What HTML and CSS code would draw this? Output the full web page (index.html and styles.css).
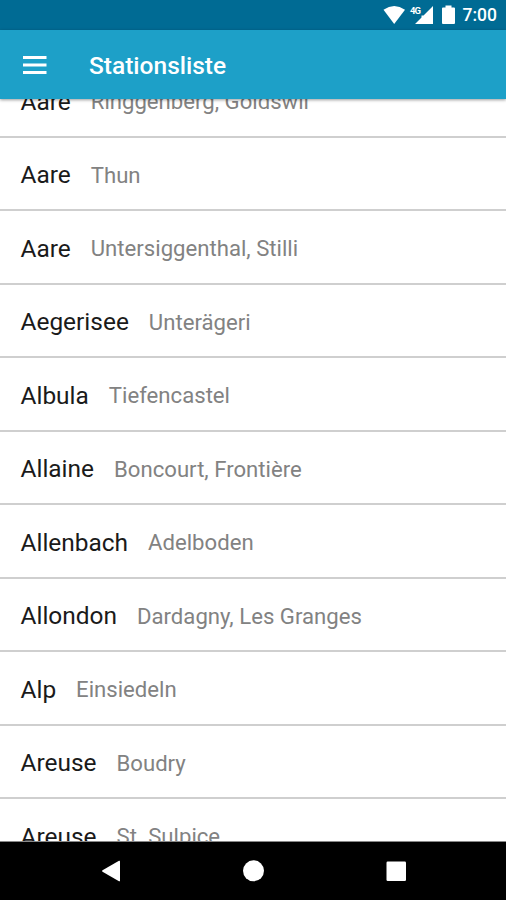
FILE: index.html
```html
<!DOCTYPE html>
<html lang="de">
<head>
<meta charset="utf-8">
<title>Stationsliste</title>
<link rel="stylesheet" href="styles.css">
</head>
<body>
<div class="status">
<svg class="status-icons" width="80" height="30" viewBox="0 0 80 30" fill="#fff">
<path d="M3.500 9.700Q14.200 2.500 25 9.700L14.200 24Z"/>
<path d="M53 6V24H35L41.500 17.500V15.500H43.500Z"/>
<path d="M62 8.500Q62 7.500 63 7.500H65.500V5.500H71.500V7.500H74Q75 7.500 75 8.500V23Q75 24 74 24H63Q62 24 62 23Z"/>
<text class="net" x="30" y="14">4G</text>
</svg>
<span class="time">7:00</span>
</div>
<header class="bar">
<svg class="menu" width="24" height="18" viewBox="0 0 24 18" fill="#fff"><path d="M0 0h23.500v3H0zM0 7.500h23.500v3H0zM0 15h23.500v3H0z"/></svg>
<h1 class="title">Stationsliste</h1>
</header>
<main class="list">
<div class="row"><span class="name">Aare</span><span class="place">Ringgenberg, Goldswil</span></div>
<div class="row"><span class="name">Aare</span><span class="place">Thun</span></div>
<div class="row"><span class="name">Aare</span><span class="place">Untersiggenthal, Stilli</span></div>
<div class="row"><span class="name">Aegerisee</span><span class="place">Unterägeri</span></div>
<div class="row"><span class="name">Albula</span><span class="place">Tiefencastel</span></div>
<div class="row"><span class="name">Allaine</span><span class="place">Boncourt, Frontière</span></div>
<div class="row"><span class="name">Allenbach</span><span class="place">Adelboden</span></div>
<div class="row"><span class="name">Allondon</span><span class="place">Dardagny, Les Granges</span></div>
<div class="row"><span class="name">Alp</span><span class="place">Einsiedeln</span></div>
<div class="row"><span class="name">Areuse</span><span class="place">Boudry</span></div>
<div class="row"><span class="name">Areuse</span><span class="place">St. Sulpice</span></div>
</main>
<nav class="nav">
<svg width="506" height="58" viewBox="0 0 506 58" fill="#fff"><path d="M102.500 28.200L119 18.800Q120 18.300 120 19.300V38.700Q120 39.700 119 39.200L102.500 29.800Q101.500 29 102.500 28.200Z"/><circle cx="253.500" cy="28.800" r="10.500"/><rect x="386.500" y="19.500" width="19.500" height="19.500" rx="1.200"/></svg>
</nav>
</body>
</html>
```
FILE: styles.css
```css
body { margin: 0; width: 506px; height: 900px; overflow: hidden; display: flex; flex-direction: column; background: #fff; font-family: Roboto, sans-serif; }
.status { flex: none; height: 30px; background: #006b94; display: flex; align-items: center; justify-content: flex-end; padding-right: 9px; color: #fff; }
.status-icons { margin-right: 3px; flex: none; }
.net { font: 700 9.500px Roboto, sans-serif; letter-spacing: -1px; }
.time { font-size: 17.500px; font-weight: 500; line-height: 32px; }
.bar { flex: none; height: 69px; background: #1da0c8; display: flex; align-items: center; box-shadow: 0 1px 3px rgba(0,0,0,.4); position: relative; z-index: 1; }
.menu { margin: 0 0 0 23px; }
.title { margin: 1px 0 0 42px; font-size: 24.500px; font-weight: 500; color: #fff; }
.list { flex: 1; min-height: 0; overflow: hidden; display: flex; flex-direction: column; box-sizing: border-box; border-bottom: 1px solid #888; }
.row { flex: none; box-sizing: border-box; height: 73.500px; border-bottom: 2px solid #cfcfcf; display: flex; align-items: center; padding: 2.500px 0 0 20.500px; gap: 20px; white-space: nowrap; }
.row:first-child { margin-top: -34.800px; }
.name { font-size: 24.450px; color: #1a1a1a; }
.place { font-size: 22.150px; color: #828282; }
.nav { flex: none; height: 58px; background: #000; }
.nav svg { display: block; }
```
